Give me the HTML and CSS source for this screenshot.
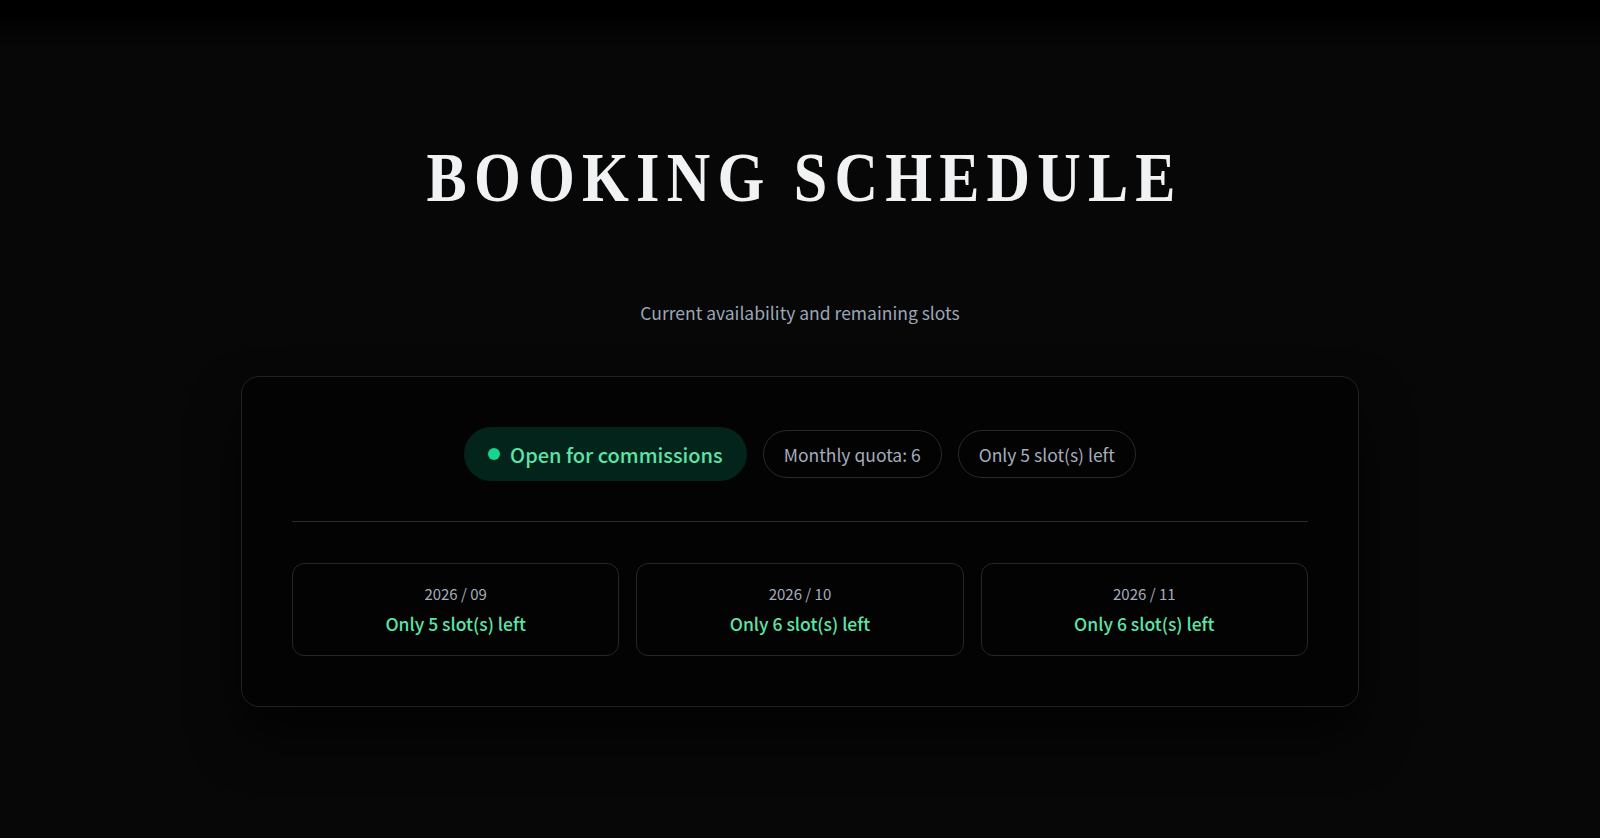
FILE: index.html
```html
<!DOCTYPE html>
<html lang="en">
<head>
  <meta charset="UTF-8">
  <meta name="viewport" content="width=device-width, initial-scale=1.0">
  <title>Booking Schedule</title>
  <link rel="stylesheet" href="styles.css">
</head>
<body>
  <main class="schedule">
    <h1 class="schedule-title">BOOKING SCHEDULE</h1>
    <p class="schedule-subtitle">Current availability and remaining slots</p>

    <section class="schedule-card">
      <div class="status-row">
        <span class="pill pill-open"><span class="dot"></span>Open for commissions</span>
        <span class="pill">Monthly quota: 6</span>
        <span class="pill">Only 5 slot(s) left</span>
      </div>

      <hr class="divider">

      <div class="months">
        <div class="month">
          <div class="month-date">2026 / 09</div>
          <div class="month-slots">Only 5 slot(s) left</div>
        </div>
        <div class="month">
          <div class="month-date">2026 / 10</div>
          <div class="month-slots">Only 6 slot(s) left</div>
        </div>
        <div class="month">
          <div class="month-date">2026 / 11</div>
          <div class="month-slots">Only 6 slot(s) left</div>
        </div>
      </div>
    </section>
  </main>
</body>
</html>
```

FILE: styles.css
```css
/* Page */
body {
  margin: 0;
  min-height: 100vh;
  font-family: "Noto Sans CJK SC", "Noto Sans", sans-serif;
  color: #a3adbd;
  background: linear-gradient(#000 0, #000 14px, #070707 50px, #070707 100%);
}

.schedule {
  display: flex;
  flex-direction: column;
  align-items: center;
  padding-top: 138px;
}

/* Heading (narrowed serif caps) */
.schedule-title {
  margin: 0;
  font-family: "Liberation Serif", serif;
  font-weight: 700;
  font-size: 70px;
  line-height: 80px;
  letter-spacing: 0.12em;
  margin-right: -0.12em;
  color: #f1f2f4;
  transform: scaleX(0.86);
}

.schedule-subtitle {
  margin: 82px 0 0;
  font-size: 17.5px;
  line-height: 26px;
  color: #9ba6b7;
}

/* Main card */
.schedule-card {
  box-sizing: border-box;
  width: 1118px;
  margin-top: 50px;
  padding: 50px;
  background-color: #030303;
  border: 1px solid #222;
  border-radius: 18px;
  box-shadow: 0 30px 50px rgba(0, 0, 0, 0.65);
}

.status-row {
  display: flex;
  justify-content: center;
  align-items: center;
  gap: 16px;
}

.pill {
  display: inline-flex;
  align-items: center;
  height: 46px;
  padding: 0 20px;
  border: 1px solid #262a2e;
  border-radius: 999px;
  font-size: 17.5px;
  color: #a3adbd;
}

.pill-open {
  height: 54px;
  padding: 0 24px;
  border: none;
  background-color: #03241a;
  color: #5de3a9;
  font-size: 20px;
  font-weight: 500;
}

.dot {
  width: 12px;
  height: 12px;
  margin-right: 10px;
  border-radius: 50%;
  background-color: #14d690;
}

.divider {
  margin: 40px 0 41px;
  border: none;
  border-top: 1px solid #2a2a2a;
}

/* Month boxes */
.months {
  display: grid;
  grid-template-columns: repeat(3, 1fr);
  gap: 17px;
}

.month {
  display: flex;
  flex-direction: column;
  align-items: center;
  justify-content: center;
  height: 93px;
  box-sizing: border-box;
  border: 1px solid #262626;
  border-radius: 12px;
  background-color: #030303;
}

.month-date {
  font-size: 15px;
  line-height: 22px;
  color: #a3adbd;
}

.month-slots {
  margin-top: 6px;
  font-size: 17.5px;
  line-height: 26px;
  font-weight: 500;
  color: #5de3a9;
}
```
